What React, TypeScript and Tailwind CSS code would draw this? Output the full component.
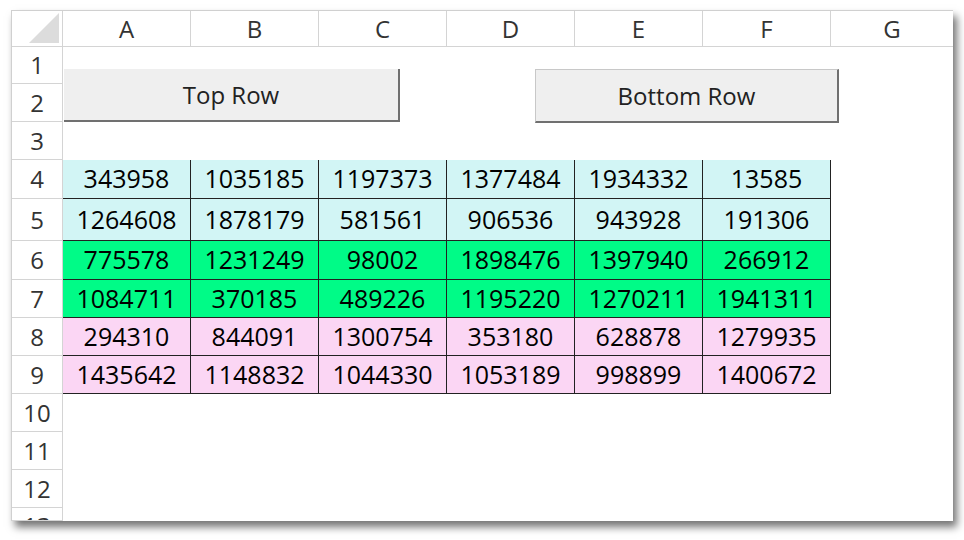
import React from "react";

const cols = ["A", "B", "C", "D", "E", "F", "G"];
const colW = [128, 128, 128, 128, 128, 128, 123];
const rowH = [37, 38, 38, 39, 42, 39, 38, 38, 38, 38, 38, 38, 13];

const data: number[][] = [
  [343958, 1035185, 1197373, 1377484, 1934332, 13585],
  [1264608, 1878179, 581561, 906536, 943928, 191306],
  [775578, 1231249, 98002, 1898476, 1397940, 266912],
  [1084711, 370185, 489226, 1195220, 1270211, 1941311],
  [294310, 844091, 1300754, 353180, 628878, 1279935],
  [1435642, 1148832, 1044330, 1053189, 998899, 1400672],
];
const bg = ["bg-[#d2f5f5]", "bg-[#d2f5f5]", "bg-[#00fb87]", "bg-[#00fb87]", "bg-[#fbd6f4]", "bg-[#fbd6f4]"];

const App: React.FC = () => {
  return (
    <div className="w-[964px] h-[540px] bg-white pt-[10px] pl-[11px]" style={{ fontFamily: '"Open Sans", "Noto Sans", sans-serif' }}>
      <div className="relative w-[942px] h-[511px] bg-white overflow-hidden shadow-[4px_6px_8px_rgba(0,0,0,0.55)] border-l border-t border-[#d0d0d0]">
        {/* column headers */}
        <div className="flex h-[36px] border-b border-[#d4d4d4]">
          <div className="w-[51px] shrink-0 border-r border-[#d4d4d4] flex items-end justify-end p-[3px]">
            <div className="w-0 h-0 border-l-[30px] border-l-transparent border-b-[30px] border-b-[#dcdcdc]" />
          </div>
          {cols.map((c, i) => (
            <div key={c} style={{ width: colW[i] }} className="shrink-0 border-r border-[#d4d4d4] flex items-center justify-center text-[24px] text-[#333]">
              {c}
            </div>
          ))}
        </div>
        {rowH.map((h, r) => (
          <div key={r} className="flex" style={{ height: h }}>
            <div
              className={
                "w-[51px] shrink-0 border-r border-b border-[#d4d4d4] flex justify-center text-[24px] text-[#333] overflow-hidden " +
                (r === 12 ? "items-start pt-[6px] leading-none" : "items-center")
              }
            >
              {r + 1}
            </div>
            {cols.map((c, i) => {
              const v = r >= 3 && r <= 8 && i < 6 ? data[r - 3][i] : null;
              return (
                <div
                  key={c}
                  style={{ width: colW[i] }}
                  className={
                    "shrink-0 flex items-center justify-center text-[25px] text-black " +
                    (v !== null ? bg[r - 3] + " border-r border-b border-[#222]" : "")
                  }
                >
                  {v}
                </div>
              );
            })}
          </div>
        ))}
        {/* buttons */}
        <div className="absolute left-[52px] top-[58px] w-[336px] h-[53px] bg-[#efefef] border-r-2 border-b-2 border-[#707070] flex items-center justify-center text-[24px] text-[#222]">
          Top Row
        </div>
        <div className="absolute left-[523px] top-[58px] w-[304px] h-[54px] bg-[#efefef] border border-[#c8c8c8] border-r-2 border-b-2 border-r-[#707070] border-b-[#707070] flex items-center justify-center text-[24px] text-[#222]">
          Bottom Row
        </div>
      </div>
    </div>
  );
};

export default App;
